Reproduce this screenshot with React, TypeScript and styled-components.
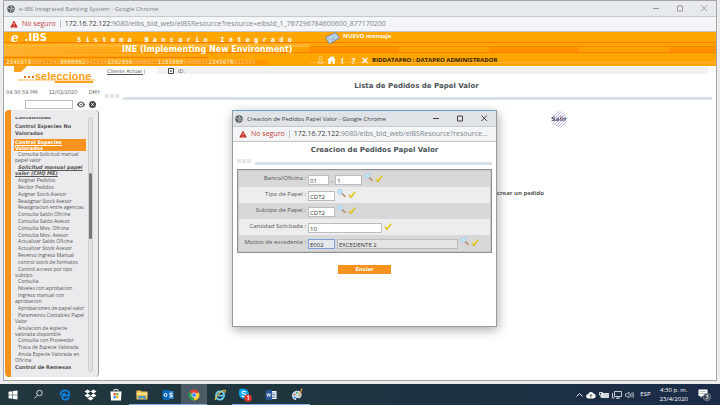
import React from "react";
import styled, { createGlobalStyle, css } from "styled-components";

const verdana = '"DejaVu Sans", Verdana, sans-serif';
const segoe = '"Open Sans", "Segoe UI", sans-serif';

const GlobalStyle = createGlobalStyle`
  * { box-sizing: border-box; }
  body { margin: 0; background: #ececed; overflow: hidden; }
  button, input { margin: 0; padding: 0; border: 0; background: none; font: inherit; color: inherit; }
  button { cursor: pointer; }
  svg { display: block; flex: none; }
`;

const Desktop = styled.div`
  display: flex;
  flex-direction: column;
  min-height: 100vh;
  font-family: ${verdana};
  color: #555;
  white-space: nowrap;
`;

const BrowserWindow = styled.section`
  position: relative;
  flex: 1;
  display: flex;
  flex-direction: column;
  margin: 0 3px 3px;
  border: 1px solid #a3a5a8;
  background: #fff;
`;

/* Browser chrome */

const TitleBar = styled.header<{ $active?: boolean }>`
  display: flex;
  align-items: center;
  gap: 4px;
  height: 16px;
  padding-left: ${(p) => (p.$active ? 2 : 3)}px;
  background: ${(p) => (p.$active ? "#dfe2e6" : "#e6eaed")};
  border-bottom: 1px solid #c4c9ce;
  color: ${(p) => (p.$active ? "#3c4043" : "#7d8186")};
  font: 6px/8px ${segoe};
`;

const WindowButtons = styled.div<{ $active?: boolean }>`
  display: flex;
  margin-left: auto;
  button {
    display: grid;
    place-items: center;
    width: 24px;
    height: 12px;
    color: ${(p) => (p.$active ? "#444" : "#999")};
  }
`;

const AddressBar = styled.div`
  display: flex;
  align-items: center;
  height: 15px;
  padding-left: 6px;
  background: #f3f5f7;
  border-bottom: 1px solid #c0c4c9;
  font: 7px/10px ${segoe};
  color: #80868b;
`;

const Insecure = styled.span`
  margin-left: 4px;
  padding-right: 4px;
  border-right: 1px solid #c0c0c0;
  line-height: 8px;
  color: #c5403a;
`;

const Url = styled.span`
  margin-left: 4px;
  b { font-weight: 400; color: #3c4043; }
`;

/* Application banner */

const Banner = styled.div`
  display: grid;
  grid-template-columns: 306px 1fr;
  height: 34px;
  flex: none;
  color: #fff;
  background:
    linear-gradient(#ff7a00, #ff7a00) 0 10px / 100% 1px no-repeat,
    linear-gradient(#ff8400, #ff8400) 0 14px / 100% 1px no-repeat,
    linear-gradient(#ff7a00, #ff7a00) 0 20px / 100% 1px no-repeat,
    repeating-linear-gradient(90deg, #ff820080 0 90px, #ffa50000 90px 180px) 305px 14px / 100% 6px no-repeat,
    linear-gradient(#ff9600, #ff9600) 0 17px / 100% 1px no-repeat,
    #ffa500;
`;

const BannerLeft = styled.div`
  display: grid;
  grid-template-columns: 72px 1fr;
  grid-template-rows: 12px 12px 10px;
  background:
    linear-gradient(#ff7a00, #ff7a00) 0 25px / 204px 1px no-repeat,
    linear-gradient(#ff9600, #ff9600) 0 28px / 264px 5px no-repeat,
    radial-gradient(#ffc04d 1px, #ffb128 1px) 0 12px / 3px 3px repeat-x,
    linear-gradient(90deg, #ffb12e, #ffa50000) 0 12px / 220px 12px no-repeat;
`;

const Logo = styled.div`
  display: flex;
  align-items: center;
  gap: 6px;
  padding-left: 7px;
  font-weight: 700;
  font-size: 10px;
  line-height: 12px;
  i { font: italic 700 12px/14px "DejaVu Serif", serif; }
`;

const Tagline = styled.div`
  padding: 4px 0 0 1px;
  font: 700 7px/8px "DejaVu Sans Mono", monospace;
  white-space: pre;
`;

const ProductName = styled.div`
  grid-column: 1 / -1;
  padding: 1px 0 0 118px;
  font: 700 8px/9px ${verdana};
`;

const Digits = styled.div`
  grid-column: 1 / -1;
  padding: 2px 0 0 2px;
  font: 700 6px/7px "DejaVu Sans Mono", monospace;
  color: #ffb45e;
  b { color: #ffe0a8; }
`;

const BannerRight = styled.div`
  display: grid;
  grid-template-rows: 22px 12px;
`;

const Message = styled.div`
  display: flex;
  gap: 3px;
  padding-left: 15px;
  font: 700 6px/9px ${segoe};
`;

const UserBar = styled.div`
  display: flex;
  align-items: center;
  gap: 2px;
  padding-left: 6px;
  background: linear-gradient(#ffb347, #ffb347) 0 8px / 100% 1px no-repeat;
  button { display: grid; place-items: center; width: 9px; height: 10px; }
  button > span { font: 700 8px/9px ${segoe}; }
`;

const UserName = styled.span`
  margin-left: 1px;
  color: #2b1c00;
  font: 700 6px/10px ${segoe};
`;

/* Side menu */

const Columns = styled.div`
  flex: 1;
  display: grid;
  grid-template-columns: 99px 1fr;
  min-height: 0;
`;

const Sidebar = styled.aside`
  display: flex;
  flex-direction: column;
  min-height: 0;
  padding-bottom: 3px;
`;

const Brand = styled.div`
  display: grid;
  height: 19px;
  padding-left: 9px;
  > * { grid-area: 1 / 1; }
  span {
    padding: 4px 0 0 22px;
    font: 700 11px/12px "Liberation Sans", Arial, sans-serif;
    color: #f9a11b;
  }
`;

const Clock = styled.div`
  display: flex;
  justify-content: space-between;
  padding: 3px 3px 0 2px;
  font-size: 5px;
  line-height: 8px;
  color: #666;
`;

const SearchRow = styled.div`
  display: flex;
  align-items: center;
  gap: 4px;
  padding: 4px 0 1px 21px;
  input { width: 48px; height: 9px; border: 1px solid #bbb; font-size: 5px; background: #fff; }
`;

const MenuPanel = styled.nav`
  flex: 1;
  display: flex;
  min-height: 0;
  margin: 0 4px 0 1px;
  padding: 7px 5px 5px 3px;
  border-left: 6px solid #f7921e;
  border-right: 1px solid #9a9a9d;
  border-radius: 4px;
  background: #ebebed;
`;

const MenuList = styled.ul`
  flex: 1;
  display: flex;
  flex-direction: column;
  justify-content: space-between;
  margin: 0;
  padding: 0 2px 0 0;
  overflow: hidden;
  list-style: none;
`;

const MenuEntry = styled.li<{ $kind?: "group" | "open" | "current" | "cut" }>`
  padding-left: 1px;
  font: 5px/6px ${segoe};
  text-indent: 3px;
  a { color: inherit; text-decoration: none; }
  ${(p) =>
    (p.$kind === "group" || p.$kind === "cut") &&
    css`text-indent: 0; font: 700 5px/7px ${verdana}; margin-bottom: 1px;`}
  ${(p) => p.$kind === "cut" && css`margin-top: -3px;`}
  ${(p) =>
    p.$kind === "open" &&
    css`
      text-indent: 0; font: 700 5px/6px ${verdana}; color: #fff; background: #f7921e;
      a { text-decoration: underline; }
    `}
  ${(p) =>
    p.$kind === "current" &&
    css`font: italic 700 5px/6px ${verdana}; a { text-decoration: underline; }`}
`;

const ScrollTrack = styled.div`
  display: flex;
  width: 5px;
  padding-top: 55px;
  border: 1px solid #cfcfd1;
  border-radius: 3px;
  background: #e0e0e2;
  &::before {
    content: "";
    flex: 1;
    height: 66px;
    border-radius: 3px;
    background: #77777a;
  }
`;

/* Main panel */

const Main = styled.main`
  display: flex;
  flex-direction: column;
  padding: 1px 4px 0 2px;
`;

const Crumbs = styled.div`
  display: flex;
  align-items: center;
  height: 7px;
  margin: 0 4px 0 2px;
  background: linear-gradient(90deg, #fff 50px, #f1f1f1 50px);
  font-size: 5px;
  a { color: #555; }
  svg { margin: 0 4px 0 23px; }
`;

const Heading = styled.h1<{ $dialog?: boolean }>`
  margin: 0;
  padding: ${(p) => (p.$dialog ? "4px 0 4px 20px" : "8px 0 3px 16px")};
  text-align: center;
  font-size: 7px;
  line-height: 9px;
  color: #4d5358;
`;

const Rule = styled.div<{ $dialog?: boolean }>`
  display: flex;
  align-items: flex-start;
  gap: 1px;
  height: 6px;
  margin: 0 ${(p) => (p.$dialog ? 4 : 0)}px;
  i { width: 4px; height: 4px; background: #e3e6e9; }
  &::after {
    content: "";
    flex: 1;
    align-self: flex-end;
    height: 3px;
    margin-left: 3px;
    background: #d8e0e8;
  }
`;

const ExitLink = styled.a`
  align-self: flex-end;
  display: grid;
  place-items: center;
  margin: 11px 145px 0 0;
  font: 700 6px/16px ${verdana};
  color: #55525e;
  text-decoration: none;
  > * { grid-area: 1 / 1; }
`;

const Note = styled.p`
  align-self: flex-end;
  margin: 61px 168px 0 0;
  font: 700 6px/10px ${segoe};
`;

/* Dialog */

const Dialog = styled.section`
  position: absolute;
  left: 228px;
  top: 109px;
  width: 265px;
  height: 217px;
  border: 1px solid #999c9f;
  border-top-color: #6f9fc9;
  background: #fff;
  box-shadow: 1px 3px 10px #0005;
`;

const FormTable = styled.table`
  width: calc(100% - 8px);
  margin: 4px 4px 0;
  padding: 1px;
  border: 1px solid #8e9194;
  border-spacing: 0;
  outline: 1px solid #c6c8ca;
  outline-offset: -2px;
  th, td { height: 16px; padding: 0; }
  th {
    width: 69px;
    padding-right: 2px;
    text-align: right;
    font: 6px/10px ${segoe};
  }
  th label { display: block; height: 12px; }
  tr:nth-child(odd) { background: #d8d8d8; }
  tr:nth-child(even) { background: #ededed; }
`;

const Fields = styled.div`
  display: flex;
  align-items: center;
  gap: 2px;
  height: 16px;
  padding-top: 2px;
  font-size: 6px;
  button { padding-bottom: 6px; }
  > svg { margin-bottom: 4px; }
`;

const Field = styled.input<{ $w: "s" | "m" | "l" | "xl"; $look?: "focus" | "locked" }>`
  width: ${(p) => ({ s: 21, m: 27, l: 74, xl: 121 })[p.$w]}px;
  height: 10px;
  && { padding: 1px 1px 0; }
  && { border: 1px solid #bcbcbc; }
  && { background: #fff; color: #333; font: 6px/8px ${segoe}; }
  ${(p) => p.$look === "locked" && css`&& { background: #e4e4e4; }`}
  ${(p) => p.$look === "focus" && css`&& { background: #e6e8ee; border-color: #7f9fd8; }`}
`;

const Submit = styled.button`
  display: block;
  width: 53px;
  height: 9px;
  && { margin: 12px auto 0; background: #f7921e; color: #fff; font: 700 5px/9px ${verdana}; }
`;

/* Taskbar */

const Taskbar = styled.footer`
  display: flex;
  justify-content: space-between;
  height: 21px;
  background: linear-gradient(90deg, #22363f, #20363f 40%, #1b2b48);
  color: #fff;
`;

const Apps = styled.div`
  display: flex;
  width: 310px;
`;

const AppButton = styled.button<{ $open?: boolean; $active?: boolean }>`
  flex: 1;
  display: grid;
  place-items: center;
  && {
    background: ${(p) => (p.$active ? "#4a5b65" : "none")};
    box-shadow: ${(p) => (p.$open ? "inset 0 -1px #7db4e6" : "none")};
  }
`;

const Tray = styled.div`
  display: flex;
  align-items: center;
  gap: 3px;
  padding-right: 9px;
  font: 6px/9px ${segoe};
  > span { margin: 0 3px; }
`;

const TimeBox = styled.div`
  margin: 0 7px 0 3px;
  text-align: center;
`;

const Globe = () => (
  <svg width="8" height="8" viewBox="0 0 16 16">
    <circle cx="8" cy="8" r="7.4" fill="#53585d" />
    <path d="M2 6c3 0 3 2 5 3s0 3 1 5M6 1.5c1 2 4 1 4 3S7 6 8 7s4 0 6 1M11 10l2 2" fill="none" stroke="#e6eaed" strokeWidth="1.8" />
  </svg>
);

const Warning = () => (
  <svg width="8" height="8" viewBox="0 0 16 16">
    <path d="M8 1 15.5 15H.5Z" fill="#c5281c" />
    <path d="M8 6v4.5M8 12v1.6" stroke="#fff" strokeWidth="1.6" />
  </svg>
);

const controlPaths = {
  Minimizar: "M0 3.5h6",
  Maximizar: "M.5 1h5v5h-5z",
  Cerrar: "M.5.5l5.500 5.500M6 .5.5 6",
};

const Controls = ({ active }: { active?: boolean }) => (
  <WindowButtons $active={active}>
    {Object.entries(controlPaths).map(([name, d]) => (
      <button key={name} type="button" aria-label={name}>
        <svg width="7" height="7" viewBox="0 0 7 7">
          <path d={d} fill="none" stroke="currentColor" />
        </svg>
      </button>
    ))}
  </WindowButtons>
);

const Chrome = ({ title, path, active }: { title: string; path: string; active?: boolean }) => (
  <>
    <TitleBar $active={active}>
      <Globe />
      <span>{title}</span>
      <Controls active={active} />
    </TitleBar>
    <AddressBar>
      <Warning />
      <Insecure>No seguro</Insecure>
      <Url><b>172.16.72.122</b>{path}</Url>
    </AddressBar>
  </>
);

const Lookup = () => (
  <button type="button" aria-label="Buscar">
    <svg width="9" height="8" viewBox="0 0 18 16">
      <path d="m10 9 6 5.500" stroke="#b5835a" strokeWidth="3" strokeLinecap="round" />
      <circle cx="6.500" cy="5.500" r="5" fill="#b9e6fa" stroke="#a9c6d8" strokeWidth="1.200" />
    </svg>
  </button>
);

const Tick = () => (
  <svg width="8" height="7" viewBox="0 0 18 16">
    <path d="M2 9 6.500 14 16 2" fill="none" stroke="#b39a2c" strokeWidth="3.400" />
    <path d="M2 8.500 6.500 13 16 1.500" fill="none" stroke="#f3da1c" strokeWidth="2.600" />
  </svg>
);

type Entry = { text: string[]; kind?: "group" | "open" | "current" | "cut" };

const menu: Entry[] = [
  { text: ["Contabilidad"], kind: "cut" },
  { text: ["Control Especies No", "Valoradas"], kind: "group" },
  { text: ["Control Especies", "Valoradas"], kind: "open" },
  { text: ["Consulta Solicitud manual", "papel valor"] },
  { text: ["Solicitud manual papel", "valor (CHQ ME)"], kind: "current" },
  { text: ["Asignar Pedidos"] },
  { text: ["Recibir Pedidos"] },
  { text: ["Asignar Stock Asesor"] },
  { text: ["Reasignar Stock Asesor"] },
  { text: ["Reasignacion entre agencias"] },
  { text: ["Consulta Saldo Oficina"] },
  { text: ["Consulta Saldo Asesor"] },
  { text: ["Consulta Mov. Oficina"] },
  { text: ["Consulta Mov. Asesor"] },
  { text: ["Actualizar Saldo Oficina"] },
  { text: ["Actualizar Stock Asesor"] },
  { text: ["Reverso Ingreso Manual"] },
  { text: ["control stock de formatos"] },
  { text: ["Control acceso por tipo", "subtipo"] },
  { text: ["Consulta"] },
  { text: ["Niveles con aprobacion"] },
  { text: ["Ingreso manual con", "aprobacion"] },
  { text: ["Aprobaciones de papel valor"] },
  { text: ["Parametros Contables Papel", "Valor"] },
  { text: ["Anulacion de especie", "valorada disponible"] },
  { text: ["Consulta con Proveedor"] },
  { text: ["Traza de Especie Valorada"] },
  { text: ["Anula Especie Valorada en", "Oficina"] },
  { text: ["Control de Remesas"], kind: "group" },
];

const IconE = ({ ring }: { ring?: boolean }) => (
  <svg width="12" height="12" viewBox="0 0 26 26">
    <path
      d={
        ring
          ? "M21.500 17.500c-2 3.500-5 5.500-8.500 5.500-5.500 0-8.500-4-8.500-9S8 5 13.500 5 22 9 22 14.500H9"
          : "M22 18.500c-2 3.500-5 4.500-8 4.500-5.500 0-8-3.500-7-8 1-3.500 4-5 7-5M2.500 13C4 6 8.500 3 13 3c6 0 9.500 4.500 9.500 11H9"
      }
      fill="none"
      stroke={ring ? "#6fcdf5" : "#0b83e0"}
      strokeWidth="4"
    />
    {ring && <path d="M3 24C1 18 17 1 24 3c1 .5.5 3-.5 5" fill="none" stroke="#f4c63a" strokeWidth="2.400" />}
  </svg>
);

const apps: { name: string; open?: boolean; active?: boolean; icon: React.ReactNode }[] = [
  {
    name: "Inicio",
    icon: (
      <svg width="10" height="10" viewBox="0 0 20 20">
        <path d="M1 3.500 9 2.300V9.500H1zM10 2.100 19 1v8.500h-9zM1 10.500h8v7.200L1 16.500zM10 10.500h9V19l-9-1.200z" fill="#fff" />
      </svg>
    ),
  },
  {
    name: "Buscar",
    icon: (
      <svg width="11" height="11" viewBox="0 0 22 22">
        <circle cx="13" cy="8" r="5.500" fill="none" stroke="#e8ecee" strokeWidth="1.700" />
        <path d="m9 12-6 7" stroke="#e8ecee" strokeWidth="1.700" />
      </svg>
    ),
  },
  { name: "Edge", icon: <IconE /> },
  {
    name: "Dropbox",
    icon: (
      <svg width="13" height="12" viewBox="0 0 26 24">
        <path d="m7 1 6 4-6 4-6-4zM19 1l6 4-6 4-6-4zM7 9l6 4-6 4-6-4zM19 9l6 4-6 4-6-4zM13 15l6 4-6 4-6-4z" fill="#fff" />
      </svg>
    ),
  },
  {
    name: "Store",
    icon: (
      <svg width="12" height="13" viewBox="0 0 24 26">
        <path d="M8 7V3h8v4" fill="none" stroke="#fff" strokeWidth="1.600" />
        <path d="M1 7h22l-1 18H2z" fill="#fff" />
        <path d="M7 10h4.500v5H7z" fill="#e8502f" />
        <path d="M12.500 10H17v5h-4.500z" fill="#7cb82f" />
        <path d="M7 16h4.500v5H7z" fill="#2a9fe0" />
        <path d="M12.500 16H17v5h-4.500z" fill="#f7b718" />
      </svg>
    ),
  },
  {
    name: "Explorador",
    open: true,
    icon: (
      <svg width="12" height="10" viewBox="0 0 24 20">
        <path d="M1 1h8l2 2h12v16H1z" fill="#f5c64c" />
        <path d="M1 6h22v3H1z" fill="#fbe39c" />
        <path d="M5 19v-7h14v7h-4v-3H9v3z" fill="#3f93d2" />
      </svg>
    ),
  },
  {
    name: "Outlook",
    open: true,
    icon: (
      <svg width="12" height="12" viewBox="0 0 24 24">
        <path d="M10 4h13v16H10z" fill="#2f86d0" />
        <path d="M1 3l13-2v22L1 21z" fill="#0a66b8" />
        <circle cx="7" cy="12" r="3" fill="none" stroke="#fff" strokeWidth="2" />
        <path d="M21 8.500h-5V12h4.500v3.500H15" fill="none" stroke="#fff" strokeWidth="1.800" />
      </svg>
    ),
  },
  {
    name: "Chrome",
    open: true,
    active: true,
    icon: (
      <svg width="12" height="12" viewBox="0 0 24 24">
        <path d="M12 12 2.500 6.500a11 11 0 0 1 19 0z" fill="#e34133" />
        <path d="M12 12V23A11 11 0 0 1 2.500 6.500z" fill="#2fa450" />
        <path d="m12 12 9.500-5.500A11 11 0 0 1 12 23z" fill="#fbcc2e" />
        <circle cx="12" cy="12" r="5" fill="#fff" />
        <circle cx="12" cy="12" r="3.900" fill="#4285f4" />
      </svg>
    ),
  },
  { name: "Internet Explorer", icon: <IconE ring /> },
  {
    name: "Skype",
    open: true,
    icon: (
      <svg width="14" height="14" viewBox="0 0 28 28">
        <circle cx="8" cy="7" r="6" fill="#00a8ec" />
        <circle cx="12" cy="12" r="10" fill="#00a8ec" />
        <path d="M16 8c-2-2-8-2-8 1s8 2 8 5.500-6 3.500-8.500 1" fill="none" stroke="#fff" strokeWidth="2.200" />
        <circle cx="20" cy="20" r="7.500" fill="#e3342c" />
        <path d="m18.500 17 2-1.500V24" fill="none" stroke="#fff" strokeWidth="1.800" />
      </svg>
    ),
  },
  {
    name: "Word",
    open: true,
    icon: (
      <svg width="12" height="12" viewBox="0 0 24 24">
        <path d="M12 4h11v16H12z" fill="#fff" />
        <path d="M14 8h7M14 11h7M14 14h7M14 17h7" stroke="#2b579a" strokeWidth="1.200" />
        <path d="m1 3 13-2v22L1 21z" fill="#2b579a" />
        <path d="m4 9 1.500 6L7.500 9l2 6L11 9" fill="none" stroke="#fff" strokeWidth="1.500" />
      </svg>
    ),
  },
  {
    name: "Paint",
    open: true,
    icon: (
      <svg width="13" height="13" viewBox="0 0 26 26">
        <path d="M2 15C2 8 10 4 16 6s7 9 3 13-6-1-8 1 1 5-3 4-6-5-6-9z" fill="#c8dfee" />
        <circle cx="7" cy="13" r="2" fill="#e2503c" />
        <circle cx="12" cy="9.500" r="2" fill="#54a849" />
        <circle cx="7.500" cy="19" r="2" fill="#3d7cc9" />
        <path d="M22 1 16 17" stroke="#d99a4a" strokeWidth="2.600" />
      </svg>
    ),
  },
];

export default function App() {
  return (
    <Desktop>
      <GlobalStyle />
      <BrowserWindow>
        <Chrome
          title="e-IBS Integrated Banking System - Google Chrome"
          path=":9080/eibs_bid_web/eIBSResource?resource=eibsId_1_767296784600600_877170200"
        />
        <Banner>
          <BannerLeft>
            <Logo><i>e</i><span>.IBS</span></Logo>
            <Tagline>{"Sistema Bancario Integrado".split("").join(" ")}</Tagline>
            <ProductName>INE (Implementing New Environment)</ProductName>
            <Digits>
              <b>2345678</b>00012341<b>0980092</b>041234<b>3392050</b>6000023<b>1103000</b>5400031<b>2345678</b>012345
            </Digits>
          </BannerLeft>
          <BannerRight>
            <Message>
              <svg width="15" height="13" viewBox="0 0 30 26">
                <path d="M1 11 21 1l8 11L9 24z" fill="#bcd3ea" stroke="#5f7f9f" strokeWidth="1.500" />
                <path d="m1 11 15 4 5-14M9 24l7-9 13-3" fill="none" stroke="#8fabc8" strokeWidth="1.200" />
              </svg>
              NUEVO mensaje
            </Message>
            <UserBar>
              <button type="button" aria-label="Usuario">
                <svg width="7" height="8" viewBox="0 0 14 16">
                  <circle cx="7" cy="4.500" r="3" fill="none" stroke="#ffe3b0" strokeWidth="1.500" />
                  <path d="M4.500 8 2 14.500h10L9.500 8" fill="none" stroke="#ffe3b0" strokeWidth="1.500" />
                </svg>
              </button>
              <button type="button" aria-label="Inicio">
                <svg width="9" height="8" viewBox="0 0 18 16">
                  <path d="M0 8.500 9 0l3 3V1h2.500v4L18 8.500h-2.500V16h-4v-5h-4v5h-5V8.500z" fill="#fff" />
                </svg>
              </button>
              <button type="button" aria-label="Avisos"><span>!</span></button>
              <button type="button" aria-label="Ayuda"><span>?</span></button>
              <button type="button" aria-label="Salir">
                <svg width="6" height="7" viewBox="0 0 12 14">
                  <path d="m1 2 10 10M11 2 1 12" stroke="#fff" strokeWidth="2.600" />
                </svg>
              </button>
              <UserName>BIDDATAPRO : DATAPRO ADMINISTRADOR</UserName>
            </UserBar>
          </BannerRight>
        </Banner>

        <Columns>
          <Sidebar>
            <Brand>
              <svg width="84" height="18" viewBox="0 0 84 18">
                <path d="M1 0h13L8 6H1z" fill="#f9a11b" />
                <path d="M5 14h77" stroke="#f9b95a" />
                <path d="M42 15h38v2H42z" fill="#f9a11b" />
                <path d="M11 10h2v2h-2zM15 10h2v2h-2zM19 10h2v2h-2z" fill="#f0701c" />
              </svg>
              <span>seleccione</span>
            </Brand>
            <Clock>
              <span>04:30:59 PM</span>
              <span>12/02/2020</span>
              <span>DMY</span>
            </Clock>
            <SearchRow>
              <input type="text" aria-label="Buscar en el menu" />
              <button type="button" aria-label="Ver">
                <svg width="8" height="7" viewBox="0 0 16 14">
                  <path d="M0 7c4-8 12-8 16 0-4 8-12 8-16 0z" fill="#555" />
                  <circle cx="8" cy="7" r="3.800" fill="#fff" />
                  <circle cx="8" cy="7" r="1.600" fill="#555" />
                </svg>
              </button>
              <button type="button" aria-label="Limpiar">
                <svg width="7" height="7" viewBox="0 0 14 14">
                  <circle cx="7" cy="7" r="7" fill="#4a4a4a" />
                  <path d="m4.500 4.500 5 5M9.500 4.500l-5 5" stroke="#fff" strokeWidth="1.800" />
                </svg>
              </button>
            </SearchRow>
            <MenuPanel>
              <MenuList>
                {menu.map(({ text, kind }) => (
                  <MenuEntry key={text.join(" ")} $kind={kind}>
                    <a href="#menu">
                      {text[0]}
                      {text[1] && <><br />{text[1]}</>}
                    </a>
                  </MenuEntry>
                ))}
              </MenuList>
              <ScrollTrack />
            </MenuPanel>
          </Sidebar>

          <Main>
            <Crumbs>
              <a href="#cliente">Cliente Actual |</a>
              <svg width="6" height="6" viewBox="0 0 12 12">
                <path d="M1 1h10v10H1z" fill="#fff" stroke="#444" strokeWidth="2" />
                <path d="M4 6h4M6 4v4" stroke="#444" strokeWidth="1.500" />
              </svg>
              <span>ID:</span>
            </Crumbs>
            <Heading>Lista de Pedidos de Papel Valor</Heading>
            <Rule><i /><i /><i /></Rule>
            <ExitLink href="#salir">
              <svg width="16" height="16" viewBox="0 0 16 16">
                <defs>
                  <clipPath id="disc"><circle cx="8" cy="8" r="8" /></clipPath>
                </defs>
                <path
                  clipPath="url(#disc)"
                  d="M-8 16 8 0M-5 16 11 0M-2 16 14 0M1 16 17 0M4 16 20 0M7 16 23 0M10 16 26 0"
                  stroke="#b4b2ea"
                />
              </svg>
              <span>Salir</span>
            </ExitLink>
            <Note>crear un pedido</Note>
          </Main>
        </Columns>

        <Dialog role="dialog" aria-label="Creacion de Pedidos Papel Valor">
          <Chrome
            active
            title="Creacion de Pedidos Papel Valor - Google Chrome"
            path=":9080/eibs_bid_web/eIBSResource?resource..."
          />
          <Heading as="h2" $dialog>Creacion de Pedidos Papel Valor</Heading>
          <Rule $dialog><i /><i /><i /></Rule>
          <form onSubmit={(e) => e.preventDefault()}>
            <FormTable>
              <tbody>
                <tr>
                  <th scope="row"><label htmlFor="banco">Banco/Oficina :</label></th>
                  <td>
                    <Fields>
                      <Field id="banco" $w="s" defaultValue="01" />-
                      <Field aria-label="Oficina" $w="m" defaultValue="1" />
                      <Lookup /><Tick />
                    </Fields>
                  </td>
                </tr>
                <tr>
                  <th scope="row"><label htmlFor="tipo">Tipo de Papel :</label></th>
                  <td><Fields><Field id="tipo" $w="m" defaultValue="CDT2" /><Lookup /><Tick /></Fields></td>
                </tr>
                <tr>
                  <th scope="row"><label htmlFor="subtipo">Subtipo de Papel :</label></th>
                  <td><Fields><Field id="subtipo" $w="m" defaultValue="CDT2" /><Lookup /><Tick /></Fields></td>
                </tr>
                <tr>
                  <th scope="row"><label htmlFor="cantidad">Cantidad Solicitada :</label></th>
                  <td><Fields><Field id="cantidad" $w="l" defaultValue="10" /><Tick /></Fields></td>
                </tr>
                <tr>
                  <th scope="row"><label htmlFor="motivo">Motivo de excedente :</label></th>
                  <td>
                    <Fields>
                      <Field id="motivo" $w="m" $look="focus" defaultValue="E002" />
                      <Field aria-label="Descripcion" $w="xl" $look="locked" readOnly value="EXCEDENTE 2" />
                      <Lookup /><Tick />
                    </Fields>
                  </td>
                </tr>
              </tbody>
            </FormTable>
            <Submit type="submit">Enviar</Submit>
          </form>
        </Dialog>
      </BrowserWindow>

      <Taskbar>
        <Apps>
          {apps.map((a) => (
            <AppButton key={a.name} type="button" aria-label={a.name} $open={a.open} $active={a.active}>
              {a.icon}
            </AppButton>
          ))}
        </Apps>
        <Tray>
          <svg width="7" height="5" viewBox="0 0 14 10">
            <path d="m1 9 6-6 6 6" fill="none" stroke="#fff" strokeWidth="1.800" />
          </svg>
          <svg width="10" height="8" viewBox="0 0 20 16">
            <path d="M5 15a4.500 4.500 0 0 1-.5-9 6 6 0 0 1 11-.500A4.800 4.800 0 0 1 15 15z" fill="#fff" />
            <path d="M10 13V7M7.500 9.500 10 7l2.500 2.500" fill="none" stroke="#1f3344" strokeWidth="1.600" />
          </svg>
          <svg width="10" height="8" viewBox="0 0 20 16">
            <path d="M5 5h14v8H5z" fill="#cfd6dc" stroke="#fff" strokeWidth="1.500" />
            <path d="M1 3h6v5H1zM4 8v5" fill="none" stroke="#fff" strokeWidth="1.600" />
          </svg>
          <svg width="10" height="9" viewBox="0 0 20 18">
            <path d="M5 3h14v10H5zM8 16.500h8M12 13v3M1 6v10h4" fill="none" stroke="#fff" strokeWidth="1.500" />
          </svg>
          <svg width="9" height="8" viewBox="0 0 18 16">
            <path d="M1 5.500h3L8 2v12l-4-3.500H1zM10.500 5q2 3 0 6M13 3.500q3 4.500 0 9M15.500 2q4 6 0 12" fill="none" stroke="#e4e8ec" strokeWidth="1.300" />
          </svg>
          <span>ESP</span>
          <TimeBox>4:30 p. m.<br />23/4/2020</TimeBox>
          <svg width="13" height="14" viewBox="0 0 26 28">
            <path d="M1 3h18v13H9l-4 4v-4H1z" fill="#fff" />
            <path d="M4 7h12M4 11h9" stroke="#9aa4b0" strokeWidth="1.400" />
            <circle cx="18" cy="18" r="7.500" fill="#3c4656" stroke="#aab2bd" />
            <path d="M15.500 14.500h5l-3 3q3.500 0 3 2.500-1.500 3-5 1" fill="none" stroke="#fff" strokeWidth="1.500" />
          </svg>
        </Tray>
      </Taskbar>
    </Desktop>
  );
}
